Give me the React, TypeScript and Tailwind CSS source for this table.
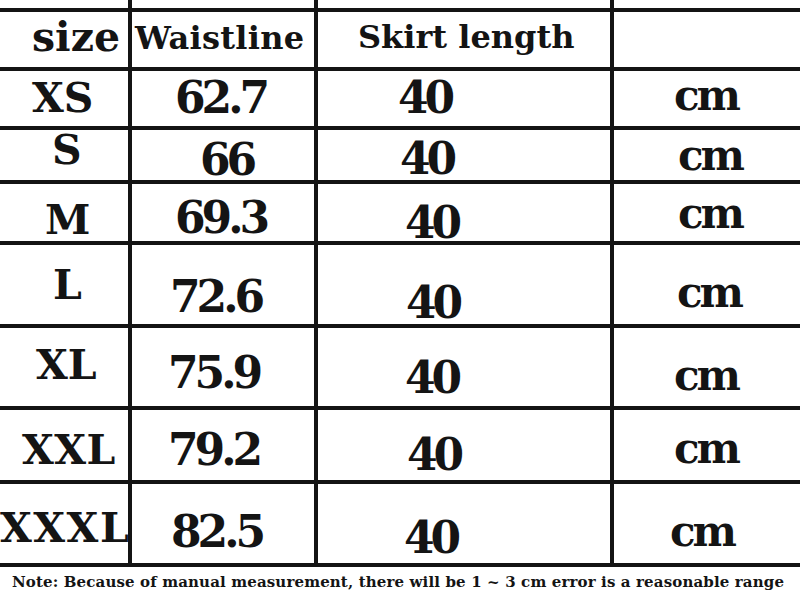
const serif = "font-['DejaVu_Serif','Liberation_Serif',serif] font-bold text-[#141414] leading-none whitespace-nowrap";

type Cell = { text: string; cls: string };

const header: Cell[] = [
  { text: "size", cls: "pl-[32px] pt-[5px] text-[41px]" },
  { text: "Waistline", cls: "pl-[3px] pt-[10px] text-[32px] tracking-[0.3px]" },
  { text: "Skirt length", cls: "pl-[40px] pt-[9px] text-[32px]" },
  { text: "", cls: "" },
];

// one entry per size: label, waist, length, unit
const rows: { h: string; cells: Cell[] }[] = [
  {
    h: "XS",
    cells: [
      { text: "XS", cls: "pl-[32px] pt-[7px]" },
      { text: "62.7", cls: "pl-[43px] pt-[5px]" },
      { text: "40", cls: "pl-[80px] pt-[5px]" },
      { text: "cm", cls: "pl-[60px] pt-[4px]" },
    ],
  },
  {
    h: "S",
    cells: [
      { text: "S", cls: "pl-[52px] pt-[0px]" },
      { text: "66", cls: "pl-[68px] pt-[8px]" },
      { text: "40", cls: "pl-[82px] pt-[7px]" },
      { text: "cm", cls: "pl-[64px] pt-[5px]" },
    ],
  },
  {
    h: "M",
    cells: [
      { text: "M", cls: "pl-[45px] pt-[16px]" },
      { text: "69.3", cls: "pl-[43px] pt-[12px]" },
      { text: "40", cls: "pl-[87px] pt-[17px]" },
      { text: "cm", cls: "pl-[64px] pt-[9px]" },
    ],
  },
  {
    h: "L",
    cells: [
      { text: "L", cls: "pl-[53px] pt-[20px]" },
      { text: "72.6", cls: "pl-[38px] pt-[30px]" },
      { text: "40", cls: "pl-[88px] pt-[36px]" },
      { text: "cm", cls: "pl-[63px] pt-[27px]" },
    ],
  },
  {
    h: "XL",
    cells: [
      { text: "XL", cls: "pl-[36px] pt-[17px]" },
      { text: "75.9", cls: "pl-[36px] pt-[23px]" },
      { text: "40", cls: "pl-[87px] pt-[28px]" },
      { text: "cm", cls: "pl-[60px] pt-[27px]" },
    ],
  },
  {
    h: "XXL",
    cells: [
      { text: "XXL", cls: "pl-[22px] pt-[20px] tracking-[0.5px]" },
      { text: "79.2", cls: "pl-[36px] pt-[18px]" },
      { text: "40", cls: "pl-[89px] pt-[23px]" },
      { text: "cm", cls: "pl-[60px] pt-[18px]" },
    ],
  },
  {
    h: "XXXL",
    cells: [
      { text: "XXXL", cls: "pl-[0px] pt-[24px] tracking-[1.5px]" },
      { text: "82.5", cls: "pl-[39px] pt-[26px]" },
      { text: "40", cls: "pl-[86px] pt-[32px]" },
      { text: "cm", cls: "pl-[56px] pt-[27px]" },
    ],
  },
];

const colText = [
  "text-[41px]",
  "text-[44px] tracking-[-4px]",
  "text-[44px] tracking-[-4px]",
  "text-[42px] tracking-[-3px]",
];

export default function App() {
  return (
    <div className="w-[800px] h-[598px] bg-white overflow-hidden flex flex-col">
      <div className="grid grid-cols-[128px_182px_292px_186px] grid-rows-[8px_55px_55px_50px_57px_79px_78px_70px_79px] gap-[4px] bg-[#141414] pb-[4px]">
        {[0, 1, 2, 3].map((i) => (
          <div key={"top" + i} className="bg-white" />
        ))}
        {header.map((c, i) => (
          <div key={"hd" + i} className={`bg-white ${serif} ${c.cls}`}>
            {c.text}
          </div>
        ))}
        {rows.map((r) =>
          r.cells.map((c, i) => (
            <div key={r.h + i} className={`bg-white ${serif} ${colText[i]} ${c.cls}`}>
              {c.text}
            </div>
          ))
        )}
      </div>
      <p className={`${serif} text-[15px] tracking-[0.14px] pl-[12px] pt-[8px]`}>
        Note: Because of manual measurement, there will be 1 ~ 3 cm error is a reasonable range
      </p>
    </div>
  );
}
